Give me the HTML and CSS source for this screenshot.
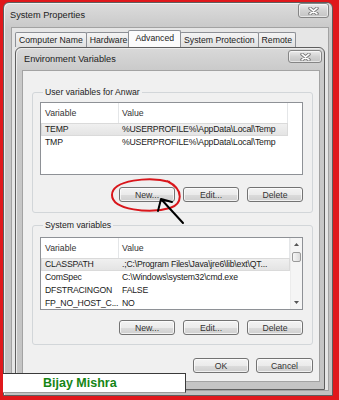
FILE: index.html
```html
<!DOCTYPE html>
<html lang="en">
<head>
  <meta charset="UTF-8" />
  <title>System Properties - Environment Variables</title>
  <link rel="stylesheet" href="styles.css">
</head>
<body>
  <div class="frame">
    <div class="window sysprops">
      <div class="titlebar">
        <span class="title">System Properties</span>
        <button class="close close-big" aria-label="Close">
          <svg width="11" height="8" viewBox="0 0 11 8"><path d="M2 1.2 L9 6.8 M9 1.2 L2 6.8" stroke="#777" stroke-width="3.4" stroke-linecap="round"/><path d="M2 1.2 L9 6.8 M9 1.2 L2 6.8" stroke="#fff" stroke-width="1.6" stroke-linecap="round"/></svg>
        </button>
      </div>

      <div class="client">
        <div class="tabs">
          <span class="tab">Computer Name</span>
          <span class="tab">Hardware</span>
          <span class="tab active">Advanced</span>
          <span class="tab">System Protection</span>
          <span class="tab">Remote</span>
        </div>

        <div class="window env">
          <div class="titlebar">
            <span class="title">Environment Variables</span>
            <button class="close close-small" aria-label="Close">
              <svg width="11" height="8" viewBox="0 0 11 8"><path d="M2 1.2 L9 6.8 M9 1.2 L2 6.8" stroke="#777" stroke-width="3.4" stroke-linecap="round"/><path d="M2 1.2 L9 6.8 M9 1.2 L2 6.8" stroke="#fff" stroke-width="1.6" stroke-linecap="round"/></svg>
            </button>
          </div>

          <div class="env-body">
            <fieldset class="group group-user">
              <legend>User variables for Anwar</legend>
              <div class="list">
                <div class="list-main">
                  <div class="list-head">
                    <span class="cell col-var">Variable</span>
                    <span class="cell col-val">Value</span>
                  </div>
                  <div class="row selected">
                    <span class="cell col-var">TEMP</span>
                    <span class="cell col-val">%USERPROFILE%\AppData\Local\Temp</span>
                  </div>
                  <div class="row">
                    <span class="cell col-var">TMP</span>
                    <span class="cell col-val">%USERPROFILE%\AppData\Local\Temp</span>
                  </div>
                </div>
              </div>
              <div class="button-row">
                <button class="btn">New...</button>
                <button class="btn">Edit...</button>
                <button class="btn">Delete</button>
              </div>
            </fieldset>

            <fieldset class="group group-sys">
              <legend>System variables</legend>
              <div class="list">
                <div class="list-main">
                  <div class="list-head">
                    <span class="cell col-var">Variable</span>
                    <span class="cell col-val">Value</span>
                  </div>
                  <div class="row selected">
                    <span class="cell col-var">CLASSPATH</span>
                    <span class="cell col-val">.;C:\Program Files\Java\jre6\lib\ext\QT...</span>
                  </div>
                  <div class="row">
                    <span class="cell col-var">ComSpec</span>
                    <span class="cell col-val">C:\Windows\system32\cmd.exe</span>
                  </div>
                  <div class="row">
                    <span class="cell col-var">DFSTRACINGON</span>
                    <span class="cell col-val">FALSE</span>
                  </div>
                  <div class="row">
                    <span class="cell col-var">FP_NO_HOST_C...</span>
                    <span class="cell col-val">NO</span>
                  </div>
                </div>
                <div class="scrollbar">
                  <span class="arrow"><svg width="5" height="3" viewBox="0 0 5 3"><path d="M0 3 L2.5 0 L5 3 Z" fill="#555"/></svg></span>
                  <span class="thumb"></span>
                  <span class="track"></span>
                  <span class="arrow"><svg width="5" height="3" viewBox="0 0 5 3"><path d="M0 0 L5 0 L2.5 3 Z" fill="#555"/></svg></span>
                </div>
              </div>
              <div class="button-row">
                <button class="btn">New...</button>
                <button class="btn">Edit...</button>
                <button class="btn">Delete</button>
              </div>
            </fieldset>

            <div class="button-row dialog-buttons">
              <button class="btn">OK</button>
              <button class="btn">Cancel</button>
            </div>
          </div>
        </div>
      </div>
    </div>
  </div>

  <div class="signature">Bijay Mishra</div>

  <svg class="annotation" width="339" height="400" viewBox="0 0 339 400">
    <path d="M170 182 C150 176 112 180 112 195 C112 210 150 214 170 208 C182 204 185 190 167 181" fill="none" stroke="#d9161b" stroke-width="2"/>
    <path d="M183 223 L161 199 M161 199 L158 211 M161 199 L172 202" fill="none" stroke="#000" stroke-width="2" stroke-linecap="round"/>
  </svg>
</body>
</html>
```

FILE: styles.css
```css
* { box-sizing: border-box; }

html, body {
  margin: 0;
}

body {
  position: relative;
  width: 339px;
  height: 400px;
  overflow: hidden;
  background: #e0181c;
  font-family: "Liberation Sans", Arial, sans-serif;
  font-size: 8.7px;
  color: #1e1e1e;
}

.frame {
  height: 100%;
  padding: 2px 6px 4px 3px;
}

/* windows */

.window {
  display: flex;
  flex-direction: column;
  border: 1px solid #5e5e5e;
  border-radius: 6px 6px 0 0;
}

.sysprops {
  height: 100%;
  background: linear-gradient(to bottom, #dcdcdc, #c8c8c8 26px, #c2c2c2);
  box-shadow: inset 1px 1px 0 #f0f0f0;
}

.titlebar {
  display: flex;
  justify-content: space-between;
  align-items: flex-start;
  flex: none;
}

.title {
  align-self: center;
  font-size: 9.2px;
  color: #222;
}

.sysprops > .titlebar {
  height: 24px;
  padding: 0 3px 0 6px;
}

.close {
  display: flex;
  align-items: center;
  justify-content: center;
  padding: 0;
  border: 1px solid #858585;
  border-radius: 3px;
  background: linear-gradient(to bottom, #ececec, #d2d2d2 50%, #c4c4c4);
  box-shadow: inset 0 0 0 1px rgba(255, 255, 255, 0.55);
}

.close-big {
  width: 31px;
  height: 15px;
}

.close-small {
  width: 34px;
  height: 13px;
  margin-top: 2px;
}

.sysprops > .client {
  flex: 1;
  margin: 0 3px 4px 7px;
  padding: 3px 0 0 3px;
  background: #e6e6e6;
  border: 1px solid #a2a2a2;
}

/* tabs */

.tabs {
  display: flex;
  height: 16px;
}

.tab {
  height: 15px;
  margin-top: 1px;
  margin-right: -1px;
  padding: 0 3px;
  border: 1px solid #8d9096;
  border-bottom: none;
  border-radius: 2px 2px 0 0;
  background: linear-gradient(to bottom, #f4f4f4, #e0e0e0);
  line-height: 15px;
  color: #222;
}

.tab.active {
  position: relative;
  z-index: 1;
  height: 17px;
  margin: -1px -1px 0 -2px;
  padding: 0 6px;
  background: #fbfbfb;
}

/* environment variables dialog */

.env {
  width: 310px;
  background: linear-gradient(to bottom, #d9d9d9, #c9c9c9 24px, #c4c4c4);
  box-shadow: inset 1px 1px 0 #ececec;
}

.env > .titlebar {
  height: 22px;
  padding: 0 2px 0 8px;
}

.env-body {
  margin: 0 4px 7px 6px;
  padding: 15px 0 8px;
  background: #f0f0f0;
  border: 1px solid #a3a3a3;
}

.group {
  margin: 0 6px 0 9px;
  padding: 4px 9px 10px 7px;
  min-width: 0;
  border: 1px solid #d2d6d9;
  border-radius: 3px;
}

.group legend {
  margin-left: 3px;
  padding: 0 2px;
  line-height: 12px;
  color: #222;
}

.group-sys {
  margin-top: 6px;
  padding-top: 6px;
  padding-bottom: 9px;
}

.list {
  display: flex;
  height: 73px;
  overflow: hidden;
  background: #fff;
  border: 1px solid #8e9196;
}

.list-main {
  flex: 1;
  min-width: 0;
}

.list-head {
  display: flex;
  height: 20px;
  line-height: 20px;
  color: #333;
}

.list-head .cell {
  border-right: 1px solid #e4e6e8;
}

.row {
  display: flex;
  height: 13px;
  line-height: 13px;
  color: #1a1a1a;
  letter-spacing: -0.2px;
}

.row.selected {
  background: linear-gradient(to bottom, #f1f1f1, #e3e3e3);
  box-shadow: inset 0 0 0 1px #dadada;
}

.cell {
  white-space: nowrap;
  overflow: hidden;
}

.col-var {
  width: 78px;
  padding-left: 4px;
}

.col-val {
  width: 169px;
  padding-left: 3px;
}

.group-sys .col-val {
  flex: 1;
}

.group-user .row {
  width: 247px;
}

.scrollbar {
  display: flex;
  flex-direction: column;
  width: 12px;
  background: #f5f5f5;
  border-left: 1px solid #ececec;
}

.arrow {
  display: flex;
  align-items: center;
  justify-content: center;
  height: 13px;
}

.thumb {
  height: 10px;
  margin: 1px 1px 0;
  border: 1px solid #9a9a9a;
  border-radius: 2px;
  background: linear-gradient(to right, #f6f6f6, #dcdcdc);
}

.track {
  flex: 1;
}

/* buttons */

.button-row {
  display: flex;
  justify-content: flex-end;
  gap: 8px;
  margin-top: 12px;
}

.group-sys .button-row {
  margin-top: 10px;
}

.dialog-buttons {
  gap: 7px;
  margin: 13px 6px 0 9px;
}

.btn {
  width: 56px;
  height: 15px;
  padding: 0;
  border: 1px solid #737373;
  border-radius: 3px;
  background: linear-gradient(to bottom, #f3f3f3, #ebebeb 50%, #dcdcdc 51%, #cfcfcf);
  box-shadow: inset 0 0 0 1px rgba(255, 255, 255, 0.7);
  font-family: inherit;
  font-size: 8.7px;
  color: #333;
}

.dialog-buttons .btn:last-child {
  width: 57px;
}

/* overlays on the screenshot */

.signature {
  position: absolute;
  left: 3px;
  top: 373px;
  width: 183px;
  height: 20px;
  padding-left: 40px;
  background: #fff;
  border: 1px solid #3a3a3a;
  border-left: none;
  border-bottom-color: #9a9a9a;
  font-size: 12.5px;
  font-weight: bold;
  line-height: 18px;
  color: #158515;
}

.annotation {
  position: absolute;
  top: 0;
  left: 0;
  pointer-events: none;
}
```
